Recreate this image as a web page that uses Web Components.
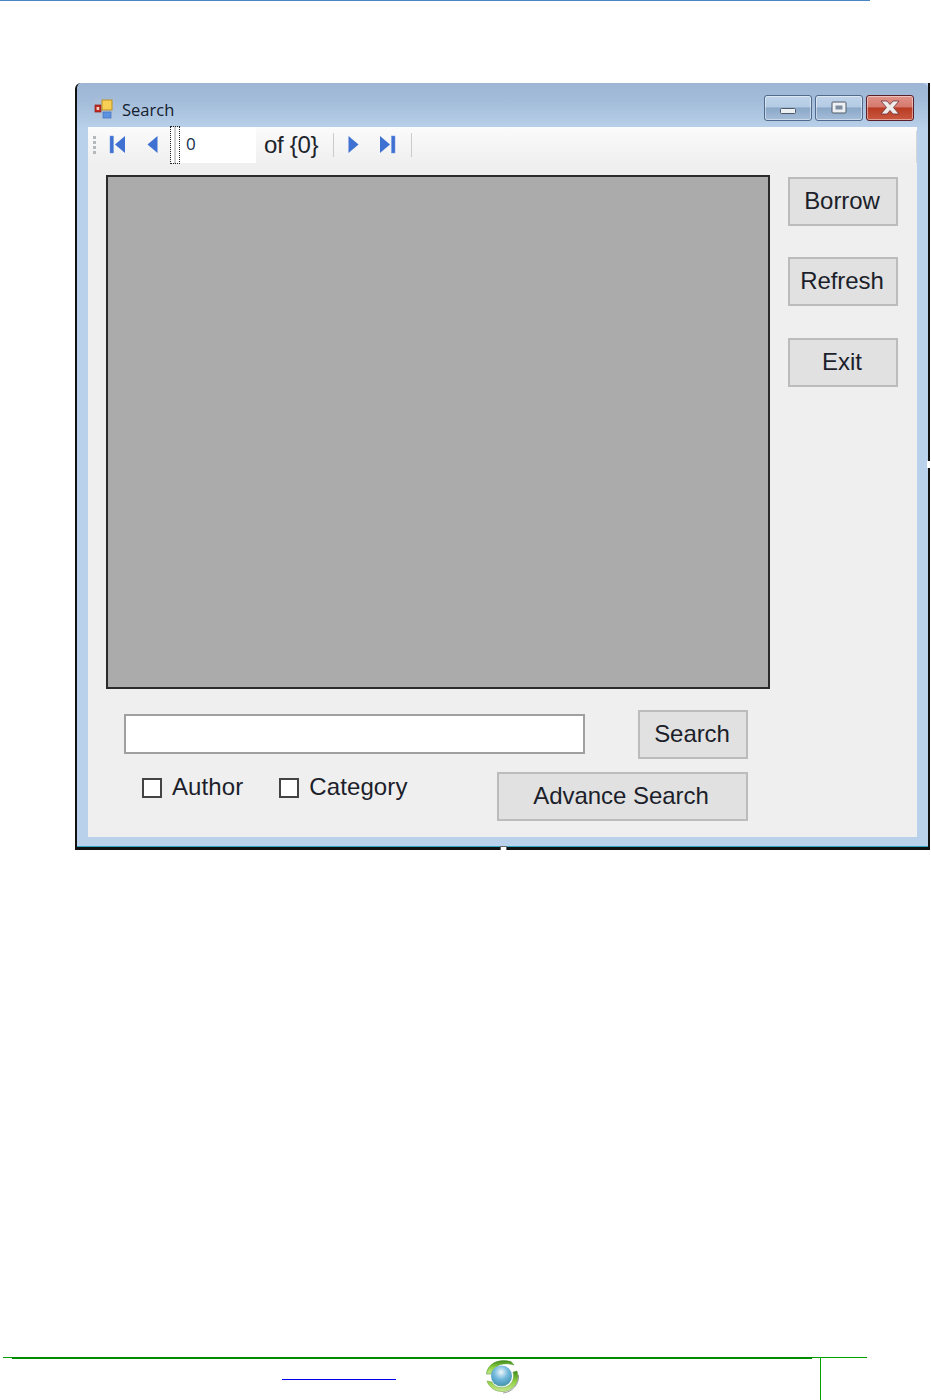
<!DOCTYPE html>
<html lang="en"><head><meta charset="utf-8"><title>Search</title>
<style>
html,body{margin:0;padding:0;background:#fff}
body{font-family:"Liberation Sans",Arial,sans-serif;color:#1c1c28}
doc-page{display:flex}
</style></head><body>
<doc-page>
  <win-frame title-text="Search">
    <nav-toolbar slot="toolbar"></nav-toolbar>
    <div style="display:flex;padding:10px 0 0 18px;gap:18px">
      <data-grid></data-grid>
      <div style="display:flex;flex-direction:column;padding-top:2px">
        <win-button w="110" style="margin-bottom:31px">Borrow</win-button>
        <win-button w="110" style="margin-bottom:32px">Refresh</win-button>
        <win-button w="110">Exit</win-button>
      </div>
    </div>
    <div style="display:flex;align-items:flex-start;padding:21px 0 0 36px">
      <win-textbox style="margin-top:4px"></win-textbox>
      <win-button w="110" style="margin-left:53px">Search</win-button>
    </div>
    <div style="display:flex;align-items:flex-start;padding:13px 0 15px 54px">
      <win-check style="margin-top:1px">Author</win-check>
      <win-check style="margin-top:1px;margin-left:36px">Category</win-check>
      <win-button w="251" style="margin-left:89px">Advance Search</win-button>
    </div>
  </win-frame>
  <page-footer></page-footer>
</doc-page>
<script>
function def(name, css, html, init){
  customElements.define(name, class extends HTMLElement{
    constructor(){super();const s=this.attachShadow({mode:"open"});s.innerHTML="<style>"+css+"</style>"+html;}
    connectedCallback(){if(init)init(this,this.shadowRoot);}
  });
}
def("doc-page",`:host{display:block;position:relative;width:931px;height:1400px;overflow:hidden;box-sizing:border-box;padding-top:83px}
 .top{position:absolute;left:0;top:0;width:870px;height:1px;background:#4a86c5}
 .wrap{display:flex;flex-direction:column;height:100%}
 .win{padding-left:75px;flex:1}`,
 `<div class="top"></div><div class="wrap"><div class="win"><slot></slot></div></div>`);

def("win-frame",`:host{display:block;position:relative;width:855px;height:767px;box-sizing:border-box;
  border-left:2px solid #111;border-right:2px solid #111;border-bottom:3px solid #111;border-top-left-radius:6px;
  background:#b9d1ea}
 .inner{display:flex;flex-direction:column;height:100%;border-bottom:1px solid #2fa7c4;box-sizing:border-box;
  background:linear-gradient(#9cb6d3 0,#a3bcd9 18px,#b9d1ea 46px,#b9d1ea 100%);padding:0 11px 9px 11px;border-top-left-radius:6px;border-top-right-radius:6px}
 .cap{display:flex;align-items:center;height:44px;flex:none}
 .ico{margin-left:6px;margin-top:8px}
 .t{font:16.5px "Open Sans","Noto Sans",sans-serif;color:#14202e;margin:8px 0 0 8px}
 .btns{margin-left:auto;display:flex;margin-top:6px;margin-right:3px;gap:3px}
 .client{flex:1;background:#efefef;display:flex;flex-direction:column;min-height:0}
 .h{position:absolute;background:#fff;box-sizing:border-box}
 .h1{right:-3px;top:378px;width:4px;height:7px}
 .h2{left:423px;bottom:-3px;width:7px;height:4px;border:1px solid #666;border-bottom:0}`,
 `<div class="inner"><div class="cap">
   <svg class="ico" width="20" height="20" viewBox="0 0 20 20">
     <rect x="0" y="0" width="20" height="20" fill="#b7c4d6" opacity=".35"/>
     <rect x="1" y="6" width="6" height="7" fill="#c22a20" stroke="#8a1a14" stroke-width=".7"/><rect x="2.600" y="8" width="2.600" height="3" fill="#f1d0c8"/>
     <rect x="8" y="1" width="10" height="10" fill="#f7cf55" stroke="#b98f22"/>
     <rect x="9" y="13" width="8" height="6" fill="#5b93e2" stroke="#3f70b8" stroke-width=".7"/></svg>
   <span class="t"></span>
   <span class="btns">
     <cap-btn kind="min"></cap-btn><cap-btn kind="max"></cap-btn><cap-btn kind="close"></cap-btn>
   </span></div>
   <slot name="toolbar"></slot>
   <div class="client"><slot></slot></div></div>
   <i class="h h1"></i><i class="h h2"></i>`,
 (el,s)=>{s.querySelector(".t").textContent=el.getAttribute("title-text");});

def("cap-btn",`:host{display:block;width:48px;height:26px;box-sizing:border-box;border:1px solid #4f6a8c;border-radius:3px;
   background:linear-gradient(#c0d4ea 0,#b4cbe4 45%,#8ba8c8 50%,#a4bdd9 100%);box-shadow:inset 0 0 0 1px rgba(255,255,255,.45)}
 :host([kind=close]){border-color:#5c1f2a;background:linear-gradient(#e09288 0,#d6796e 45%,#b93c24 50%,#c9583f 100%)}
 div{display:flex;align-items:center;justify-content:center;height:100%}`,
 `<div></div>`,
 (el,s)=>{const k=el.getAttribute("kind");const d=s.querySelector("div");
  d.innerHTML=k=="min"?'<svg width="18" height="16" viewBox="0 0 18 16"><rect x="1.500" y="8.500" width="15" height="5" rx="1" fill="#eef1f4" stroke="#4f5a68"/></svg>'
  :k=="max"?'<svg width="16" height="14" viewBox="0 0 16 14"><rect x="1" y="1" width="14" height="11" rx="1" fill="#eef1f4" stroke="#4f5a68"/><rect x="4.500" y="4.500" width="7" height="4" fill="#7e8ea2"/></svg>'
  :'<svg width="24" height="18" viewBox="0 0 24 18"><path d="M3 2 L9 2 L12 5.500 L15 2 L21 2 L15.500 8.500 L21 15 L15 15 L12 11.500 L9 15 L3 15 L8.500 8.500 Z" fill="#f0ecec" stroke="#6a3038" stroke-width=".8"/></svg>';});

def("nav-toolbar",`:host{display:flex;align-items:center;height:38px;flex:none;box-sizing:border-box;position:relative;
   background:linear-gradient(#fbfbfb,#f5f5f5 50%,#efefef)}
 .grip{display:grid;gap:2px;margin-left:5px;margin-top:-3px}
 .grip i{display:block;width:3px;height:3px;background:#b5b8bc}
 svg{display:block;flex:none}
 .tb{position:relative;width:85px;height:36px;background:#fff;margin:-2px 0 0 -9px;flex:none;
   font:17px "Open Sans","Noto Sans",sans-serif;color:#12304e;line-height:34px;padding-left:15px;box-sizing:border-box}
 .focus{width:10px;height:38px;border:1px dotted #222;box-sizing:border-box;margin:-2px 0 0 -1px;position:relative;z-index:1;flex:none;background:linear-gradient(90deg,transparent 3px,#cfcfcf 3px,#cfcfcf 5px,transparent 5px)}
 .of{font-size:24px;letter-spacing:-.3px;margin-left:8px;color:#20242c;margin-top:-2px;white-space:nowrap}
 .sep{width:1px;height:24px;background:#c9cbcd;flex:none;margin-top:-2px}
 .edge{position:absolute;right:0;top:4px;width:1px;height:32px;background:#d6d6d6}`,
 `<div class="grip"><i></i><i></i><i></i><i></i></div>
  <svg style="margin:-4px 0 0 13px" width="17" height="19" viewBox="0 0 17 19"><rect x="1" y="1" width="3.500" height="17" fill="#3f71d2" stroke="#6f97de" stroke-width=".5"/><path d="M16 1V18L6 9.500Z" fill="#3f71d2"/></svg>
  <svg style="margin:-4px 0 0 21px" width="11" height="19" viewBox="0 0 11 19"><path d="M10.500 1V18L.5 9.500Z" fill="#3f71d2"/></svg>
  <div style="width:13px;flex:none"></div><div class="focus"></div><div class="tb">0</div>
  <span class="of">of {0}</span>
  <div class="sep" style="margin-left:15px"></div>
  <svg style="margin:-4px 0 0 14px" width="11" height="19" viewBox="0 0 11 19"><path d="M.5 1V18L10.500 9.500Z" fill="#3f71d2"/></svg>
  <svg style="margin:-4px 0 0 20px" width="17" height="19" viewBox="0 0 17 19"><path d="M1 1V18L11 9.500Z" fill="#3f71d2"/><rect x="12.500" y="1" width="3.500" height="17" fill="#3f71d2" stroke="#6f97de" stroke-width=".5"/></svg>
  <div class="sep" style="margin-left:15px"></div><i class="edge"></i>`);

def("data-grid",`:host{display:block;width:664px;height:514px;box-sizing:border-box;background:#ababab;border:2px solid #2b2b2b;flex:none}`,`<div></div>`);

def("win-button",`:host{display:flex;align-items:center;justify-content:center;height:49px;box-sizing:border-box;flex:none;
   background:#e1e1e1;border:2px solid #bcbcbc;font:24px "Liberation Sans",Arial,sans-serif;letter-spacing:-.05px;color:#1c1f2b;padding:0 2px 2px 0}`,
 `<slot></slot>`,(el)=>{el.style.width=el.getAttribute("w")+"px";});

def("win-textbox",`:host{display:block;width:461px;height:40px;box-sizing:border-box;background:#fff;border:2px solid #a0a0a0;flex:none}`,`<div></div>`);

def("win-check",`:host{display:flex;align-items:center;flex:none;font:24px "Liberation Sans",Arial,sans-serif;letter-spacing:.1px;color:#1c1f2b;height:28px}
 i{display:block;width:20px;height:20px;box-sizing:border-box;border:2px solid #444;background:#fff;margin:1px 10px 0 0}`,
 `<i></i><slot></slot>`);

def("page-footer",`:host{position:absolute;left:0;top:1357px;width:931px;height:43px;display:block}
 .thin{position:absolute;left:3px;top:0;width:864px;height:1px;background:#00a000}
 .thick{position:absolute;left:12px;top:0;width:800px;height:2px;background:#008a00}
 .v{position:absolute;left:820px;top:1px;width:1px;height:42px;background:#00a000}
 .u{position:absolute;left:282px;top:22px;width:114px;height:1px;background:#0000ee}
 svg{position:absolute;left:484px;top:1px}`,
 `<div class="thin"></div><div class="thick"></div><div class="v"></div><div class="u"></div>
 <svg width="38" height="36" viewBox="0 0 38 36">
  <defs><radialGradient id="b" cx=".48" cy=".32" r=".75"><stop offset="0" stop-color="#eef7fa"/><stop offset=".45" stop-color="#72b8dc"/><stop offset=".8" stop-color="#4c9ab8"/><stop offset="1" stop-color="#8cc47a"/></radialGradient>
  <linearGradient id="g" x1="0" y1="0" x2="0" y2="1"><stop offset="0" stop-color="#3f8a1a"/><stop offset=".5" stop-color="#8fd040"/><stop offset="1" stop-color="#c8e890"/></linearGradient></defs>
  <path d="M2.500 16C3 7 13 0 27 3.500L30 7C21 4 10 6 7 16Z" fill="url(#g)" stroke="#3d8a1a" stroke-width=".5"/>
  <path d="M33 13C37 24 28 34.500 17 33.500 10 33 5 29 3 23L8 24C10 28 14 30.500 20 29.500 27 28 31 22 29 14Z" fill="url(#g)" stroke="#6a9a40" stroke-width=".5"/>
  <path d="M34.500 17C35.500 26 28 34.500 19 35" fill="none" stroke="#555" stroke-width="1" opacity=".55"/>
  <circle cx="17.500" cy="18" r="10.500" fill="url(#b)"/>
 </svg>`);
</script>
</body></html>
